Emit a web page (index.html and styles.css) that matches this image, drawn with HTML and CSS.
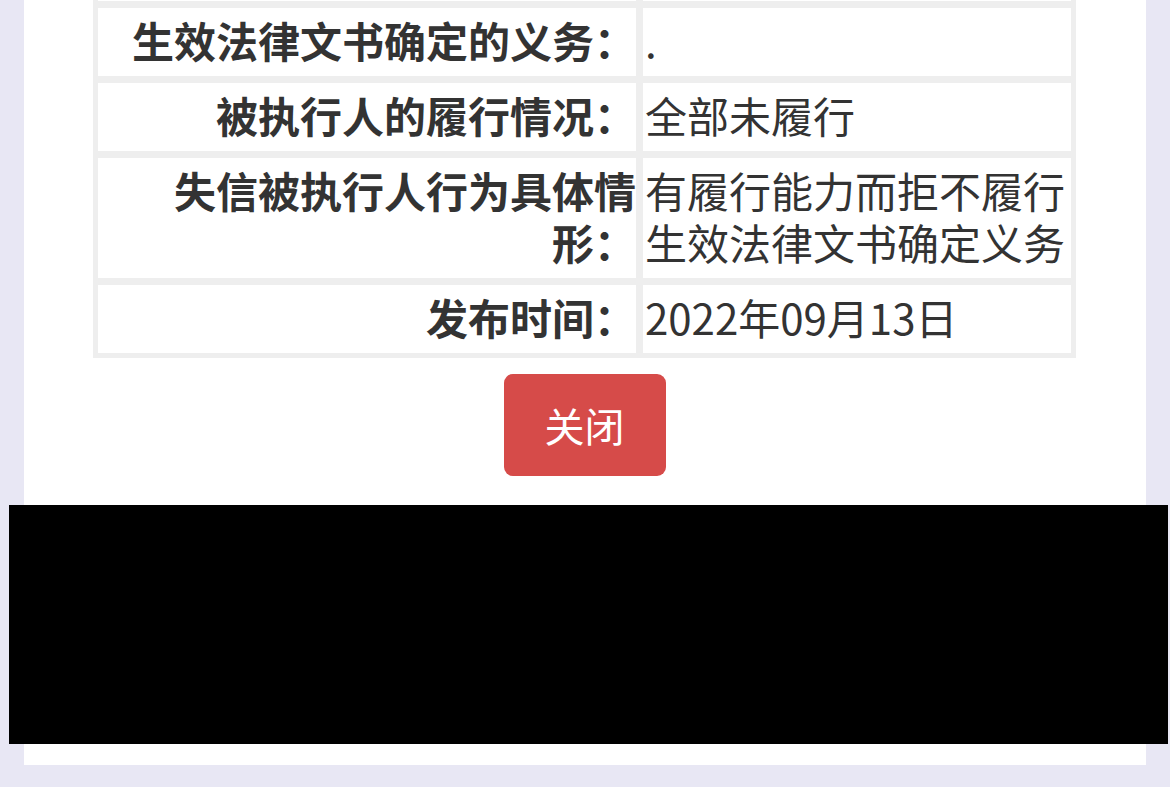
FILE: index.html
```html
<!DOCTYPE html>
<html lang="zh-CN">
<head>
<meta charset="utf-8">
<title>失信被执行人详情</title>
<link rel="stylesheet" href="styles.css">
</head>
<body>
<div class="panel">
  <div class="sheet">
    <div class="label cut"></div>
    <div class="value cut"></div>
    <div class="label">生效法律文书确定的义务：</div>
    <div class="value">.</div>
    <div class="label">被执行人的履行情况：</div>
    <div class="value">全部未履行</div>
    <div class="label">失信被执行人行为具体情形：</div>
    <div class="value">有履行能力而拒不履行生效法律文书确定义务</div>
    <div class="label">发布时间：</div>
    <div class="value">2022年09月13日</div>
  </div>
  <div class="actions">
    <button class="btn-close" type="button">关闭</button>
  </div>
  <div class="redaction"></div>
</div>
</body>
</html>
```
FILE: styles.css
```css
html, body {
  margin: 0;
  padding: 0;
}
body {
  background: #e8e7f4;
  font-family: "Noto Sans CJK SC", "Noto Sans", sans-serif;
  color: #333333;
  height: 787px;
  overflow: hidden;
}
.panel {
  background: #ffffff;
  margin: -72px 24px 0 24px;
  padding: 0 70px 21px 69px;
}
.sheet {
  display: grid;
  grid-template-columns: 538px 1fr;
  gap: 7px;
  padding: 5px;
  background: #eeeeee;
}
.label,
.value {
  background: #ffffff;
  font-size: 42px;
  line-height: 52px;
  padding: 6px 0 10px 0;
}
.cut {
  height: 68px;
  box-sizing: border-box;
}
.label {
  font-weight: 700;
  text-align: right;
}
.value {
  text-align: left;
  padding-left: 2px;
  padding-right: 4px;
}
.actions {
  display: flex;
  justify-content: center;
  padding-top: 16px;
}
.btn-close {
  width: 162px;
  height: 102px;
  border: none;
  border-radius: 9px;
  background: #d64b49;
  color: #ffffff;
  font-family: "Noto Sans CJK SC", sans-serif;
  font-size: 40px;
  line-height: 1;
  padding: 0;
}
.redaction {
  background: #000000;
  height: 239px;
  margin: 29px -92px 0 -84px;
}
```
